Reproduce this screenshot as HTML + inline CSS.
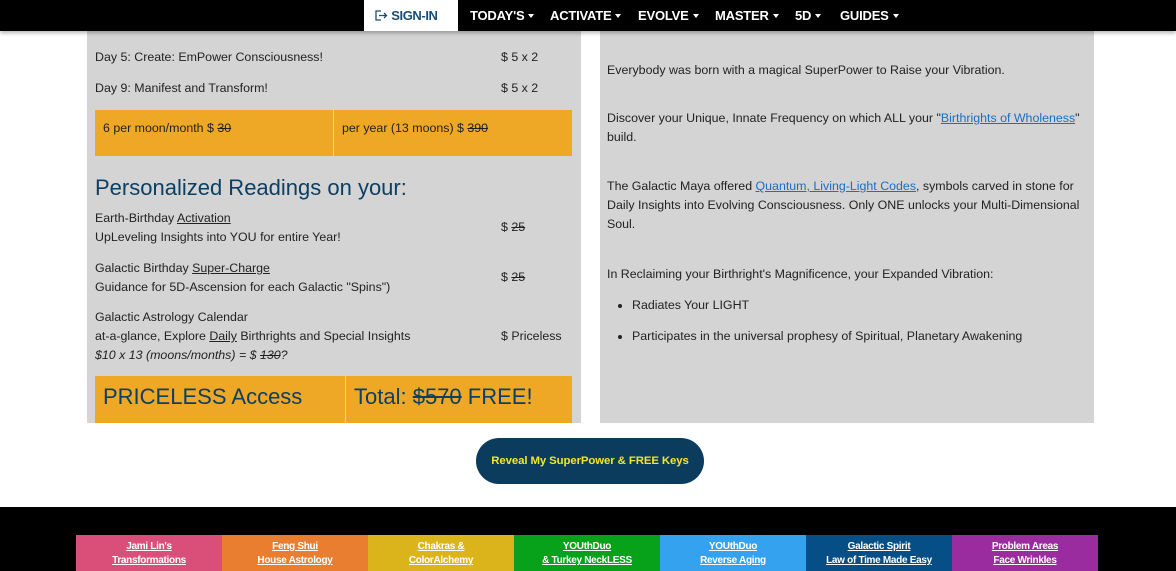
<!DOCTYPE html>
<html><head><style>
*{margin:0;padding:0;box-sizing:border-box}
body{width:1176px;height:571px;overflow:hidden;background:#fff;font-family:"Liberation Sans",Arial,sans-serif;font-size:12.4px;color:#222;position:relative}
.a{position:absolute}
.nav{left:0;top:0;width:1176px;height:31px;background:#000;box-shadow:0 2px 4px rgba(0,0,0,.3);z-index:5}
.nav span{position:absolute;top:8px;color:#fff;font-weight:bold;font-size:13px;letter-spacing:-.2px}
.nav span i{display:inline-block;width:0;height:0;border-left:3.5px solid transparent;border-right:3.5px solid transparent;border-top:4px solid #fff;vertical-align:middle;margin-left:4px;margin-top:-2px}
.panel{background:#d4d4d4}
.or{background:#efa825}
a{color:#1a6fc4;text-decoration:underline}
u{text-decoration:underline}
s{text-decoration:line-through}
.blue{color:#0c3f64}
.ft div{position:absolute;top:535px;height:36px;width:146px;color:#fff;font-size:10px;font-weight:bold;text-align:center;line-height:14px;padding-top:5px;text-decoration:underline;letter-spacing:-.3px}
li{margin-left:25px}
</style></head><body>
<div class="a nav">
 <div class="a" style="left:364px;top:0;width:94px;height:31px;background:#fff"></div>
 <span style="left:375px;color:#1b4d74;font-weight:bold;letter-spacing:-.4px"><svg width="13" height="11" viewBox="0 0 13 11" style="vertical-align:-1px"><path d="M6 1H1v9h5M4 5.5h7M9 3l2.5 2.5L9 8" fill="none" stroke="#1b4d74" stroke-width="1.3"/></svg> SIGN-IN</span>
 <span style="left:470px">TODAY'S<i></i></span>
 <span style="left:550px">ACTIVATE<i></i></span>
 <span style="left:638px">EVOLVE<i></i></span>
 <span style="left:715px">MASTER<i></i></span>
 <span style="left:795px">5D<i></i></span>
 <span style="left:840px">GUIDES<i></i></span>
</div>

<div class="a panel" style="left:87px;top:0;width:494px;height:423px"></div>
<div class="a panel" style="left:600px;top:0;width:494px;height:423px"></div>

<div class="a" style="left:95px;top:50px">Day 5: Create: EmPower Consciousness!</div>
<div class="a" style="left:501px;top:50px">$ 5 x 2</div>
<div class="a" style="left:95px;top:81px">Day 9: Manifest and Transform!</div>
<div class="a" style="left:501px;top:81px">$ 5 x 2</div>
<div class="a or" style="left:95px;top:110px;width:238px;height:46px;padding:11px 8px">6 per moon/month $ <s>30</s></div>
<div class="a or" style="left:334px;top:110px;width:238px;height:46px;padding:11px 8px">per year (13 moons) $ <s>390</s></div>

<div class="a blue" style="left:95px;top:175px;font-size:22px">Personalized Readings on your:</div>
<div class="a" style="left:95px;top:209px;line-height:19px">Earth-Birthday <u>Activation</u><br>UpLeveling Insights into YOU for entire Year!</div>
<div class="a" style="left:501px;top:220px">$ <s>25</s></div>
<div class="a" style="left:95px;top:259px;line-height:19px">Galactic Birthday <u>Super-Charge</u><br>Guidance for 5D-Ascension for each Galactic "Spins")</div>
<div class="a" style="left:501px;top:270px">$ <s>25</s></div>
<div class="a" style="left:95px;top:308px;line-height:19px">Galactic Astrology Calendar<br>at-a-glance, Explore <u>Daily</u> Birthrights and Special Insights<br><i>$10 x 13 (moons/months) = $ <s>130</s>?</i></div>
<div class="a" style="left:501px;top:329px">$ Priceless</div>
<div class="a or blue" style="left:95px;top:376px;width:250px;height:47px;padding:8px 8px;font-size:22px">PRICELESS Access</div>
<div class="a or blue" style="left:346px;top:376px;width:226px;height:47px;padding:8px 8px;font-size:22px">Total: <s>$570</s> FREE!</div>

<div class="a" style="left:607px;top:61px;width:482px;line-height:19px">Everybody was born with a magical SuperPower to Raise your Vibration.</div>
<div class="a" style="left:607px;top:109px;width:482px;line-height:19px">Discover your Unique, Innate Frequency on which ALL your "<a>Birthrights of Wholeness</a>" build.</div>
<div class="a" style="left:607px;top:177px;width:482px;line-height:19px">The Galactic Maya offered <a>Quantum, Living-Light Codes</a>, symbols carved in stone for Daily Insights into Evolving Consciousness. Only ONE unlocks your Multi-Dimensional Soul.</div>
<div class="a" style="left:607px;top:265px;width:482px;line-height:19px">In Reclaiming your Birthright's Magnificence, your Expanded Vibration:</div>
<ul class="a" style="left:607px;top:296px;width:482px;line-height:19px">
<li>Radiates Your LIGHT</li>
<li style="margin-top:12px">Participates in the universal prophesy of Spiritual, Planetary Awakening</li>
</ul>

<div class="a" style="left:476px;top:438px;width:228px;height:46px;border-radius:23px;background:#0b3c5d;color:#f5e52a;font-weight:bold;font-size:11.4px;text-align:center;line-height:46px;letter-spacing:-.1px">Reveal My SuperPower &amp; FREE Keys</div>

<div class="a" style="left:0;top:507px;width:1176px;height:64px;background:#000"></div>
<div class="ft">
<div style="left:76px;background:#d94f7a">Jami Lin's<br>Transformations</div>
<div style="left:222px;background:#e97e30">Feng Shui<br>House Astrology</div>
<div style="left:368px;background:#dbb41c">Chakras &amp;<br>ColorAlchemy</div>
<div style="left:514px;background:#08a21a">YOUthDuo<br>&amp; Turkey NeckLESS</div>
<div style="left:660px;background:#35a2f0">YOUthDuo<br>Reverse Aging</div>
<div style="left:806px;background:#064f86">Galactic Spirit<br>Law of Time Made Easy</div>
<div style="left:952px;width:146px;background:#9b2c9f">Problem Areas<br>Face Wrinkles</div>
</div>
</body></html>
